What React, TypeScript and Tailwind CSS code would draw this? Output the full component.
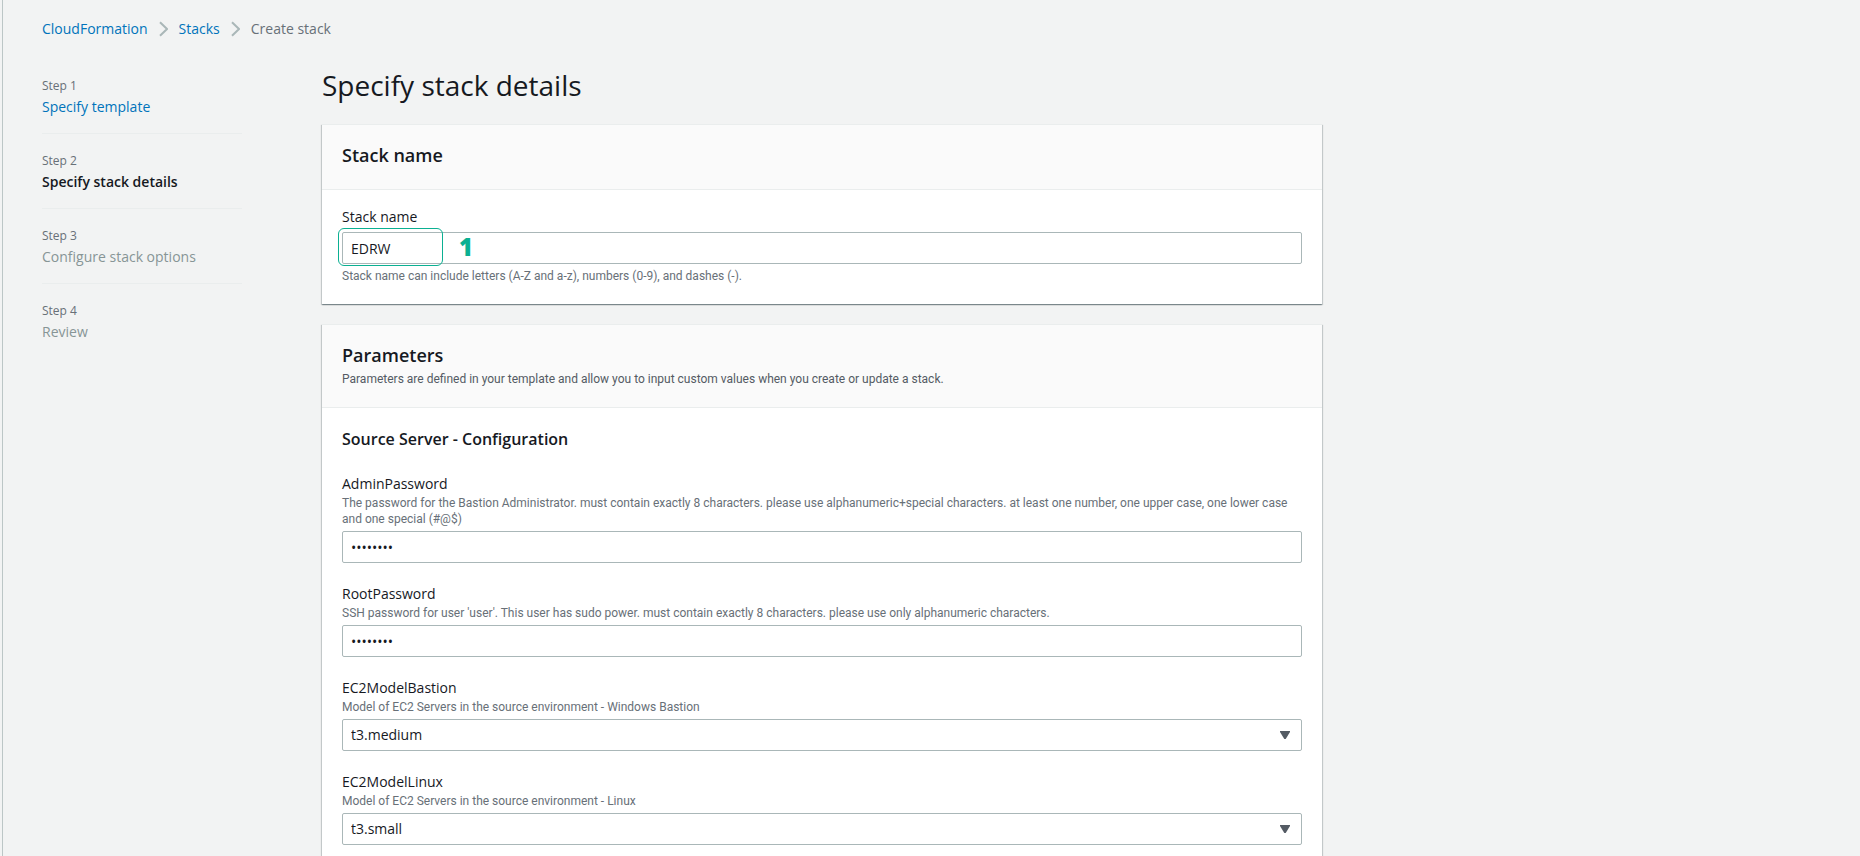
import type { ReactNode } from "react";
import clsx from "clsx";

const steps = [
  { label: "Step 1", title: "Specify template", state: "done" },
  { label: "Step 2", title: "Specify stack details", state: "current" },
  { label: "Step 3", title: "Configure stack options", state: "next" },
  { label: "Step 4", title: "Review", state: "next" },
];

const controlClass =
  "block h-8 w-full appearance-none rounded-xs border border-[#aab7b8] bg-white px-2 text-sm text-[#16191f] focus:outline-none";

const hintClass = "font-['Roboto',sans-serif] text-xs leading-4";

const Separator = () => (
  <svg className="mx-[11px] h-4 w-[9px]" viewBox="0 0 9 16" fill="none" stroke="#aab7b8" strokeWidth="2" aria-hidden="true">
    <path d="M1 1.2 8 8 1 14.8" />
  </svg>
);

const Breadcrumbs = () => (
  <nav aria-label="Breadcrumbs" className="flex h-[22px] items-center text-sm">
    <a href="#cloudformation" className="text-[#0073bb]">CloudFormation</a>
    <Separator />
    <a href="#stacks" className="text-[#0073bb]">Stacks</a>
    <Separator />
    <span className="text-[#687078]">Create stack</span>
  </nav>
);

const StepList = () => (
  <ol className="w-[200px] shrink-0 divide-y divide-[#eaeded]">
    {steps.map((step) => (
      <li key={step.label} className="h-[75px] pt-[19px]">
        <div className="text-xs leading-4 text-[#687078]">{step.label}</div>
        <div className="mt-[2px] text-sm leading-[22px]">
          {step.state === "done" ? (
            <a href="#template" className="text-[#0073bb]">{step.title}</a>
          ) : (
            <span className={clsx(step.state === "current" ? "font-semibold text-[#16191f]" : "text-[#879596]")}>
              {step.title}
            </span>
          )}
        </div>
      </li>
    ))}
  </ol>
);

const Panel = ({ title, description, children }: { title: string; description?: string; children: ReactNode }) => (
  <section className="border-t border-[#eaeded] bg-white shadow-[0_1px_1px_0_rgba(0,28,36,0.3),1px_1px_1px_0_rgba(0,28,36,0.15),-1px_1px_1px_0_rgba(0,28,36,0.15)]">
    <header className="border-b border-[#eaeded] bg-[#fafafa] px-5 pt-4 pb-5">
      <h2 className="text-lg leading-7 font-semibold text-[#16191f]">{title}</h2>
      {description && <p className={clsx(hintClass, "mt-[2px] text-[#545b64]")}>{description}</p>}
    </header>
    <div className="px-5 pt-4 pb-5">{children}</div>
  </section>
);

const Field = ({ id, hint, children }: { id: string; hint: string; children: ReactNode }) => (
  <div>
    <label htmlFor={id} className="block text-sm leading-[22px] text-[#16191f]">{id}</label>
    <p className={clsx(hintClass, "mb-1 text-[#687078]")}>{hint}</p>
    {children}
  </div>
);

const PasswordField = ({ id, hint }: { id: string; hint: string }) => (
  <Field id={id} hint={hint}>
    <input id={id} type="password" defaultValue="Passw0r#" className={controlClass} />
  </Field>
);

const SelectField = ({ id, hint, options }: { id: string; hint: string; options: string[] }) => (
  <Field id={id} hint={hint}>
    <div className="relative">
      <select id={id} className={controlClass}>
        {options.map((option) => (
          <option key={option}>{option}</option>
        ))}
      </select>
      <svg className="pointer-events-none absolute top-3 right-3 h-2 w-[10px]" viewBox="0 0 10 8" fill="#545b64" aria-hidden="true">
        <path d="M0 0h10v1L5.7 8H4.3L0 1z" />
      </svg>
    </div>
  </Field>
);

const App = () => {
  return (
    <div className="h-screen overflow-hidden bg-[#f2f3f3] pl-[2px] font-['Open_Sans',sans-serif]">
      <div className="min-h-full border-l border-[#bcc6c6] pt-[18px] pr-10 pl-[39px]">
        <Breadcrumbs />
        <div className="mt-[19px] flex gap-20">
          <StepList />
          <main className="max-w-[1000px] min-w-0 flex-1 pt-[7px]">
            <h1 className="mb-5 text-[28px] leading-[38px] text-[#16191f]">Specify stack details</h1>
            <div className="flex flex-col gap-5">
              <Panel title="Stack name">
                <label htmlFor="stack-name" className="mb-1 block text-sm leading-[22px] text-[#16191f]">
                  Stack name
                </label>
                <div className="relative">
                  <input id="stack-name" type="text" defaultValue="EDRW" className={controlClass} />
                  <div className="pointer-events-none absolute -top-1 -left-1 flex items-center gap-4">
                    <div className="h-[38px] w-[105px] rounded-md border border-[#0bb092]" />
                    <span className="text-2xl font-extrabold text-[#0bb092]">1</span>
                  </div>
                </div>
                <p className={clsx(hintClass, "mt-1 text-[#687078]")}>
                  Stack name can include letters (A-Z and a-z), numbers (0-9), and dashes (-).
                </p>
              </Panel>

              <Panel
                title="Parameters"
                description="Parameters are defined in your template and allow you to input custom values when you create or update a stack."
              >
                <h3 className="mt-[5px] mb-6 text-base leading-5 font-semibold text-[#16191f]">
                  Source Server - Configuration
                </h3>
                <div className="flex flex-col gap-5">
                  <PasswordField
                    id="AdminPassword"
                    hint="The password for the Bastion Administrator. must contain exactly 8 characters. please use alphanumeric+special characters. at least one number, one upper case, one lower case and one special (#@$)"
                  />
                  <PasswordField
                    id="RootPassword"
                    hint="SSH password for user 'user'. This user has sudo power. must contain exactly 8 characters. please use only alphanumeric characters."
                  />
                  <SelectField
                    id="EC2ModelBastion"
                    hint="Model of EC2 Servers in the source environment - Windows Bastion"
                    options={["t3.medium", "t3.small"]}
                  />
                  <SelectField
                    id="EC2ModelLinux"
                    hint="Model of EC2 Servers in the source environment - Linux"
                    options={["t3.small", "t3.medium"]}
                  />
                </div>
              </Panel>
            </div>
          </main>
        </div>
      </div>
    </div>
  );
};

export default App;
